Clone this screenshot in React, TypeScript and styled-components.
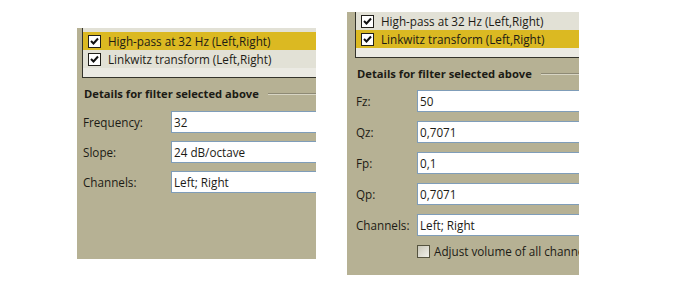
import React from 'react';
import styled, { createGlobalStyle } from 'styled-components';

const GlobalStyle = createGlobalStyle`
  html, body {
    margin: 0;
    padding: 0;
    background: #fff;
  }
  body {
    font-family: 'Open Sans', 'Liberation Sans', sans-serif;
    font-size: 11.7px;
    color: #1c1b15;
  }
`;

const Page = styled.div`
  width: 676px;
  height: 289px;
  box-sizing: border-box;
  padding-left: 77px;
  display: flex;
  align-items: flex-start;
  gap: 31px;
  overflow: hidden;
`;

const Panel = styled.div<{ $top: number; $width: number; $height: number }>`
  margin-top: ${(p) => p.$top}px;
  width: ${(p) => p.$width}px;
  height: ${(p) => p.$height}px;
  flex-shrink: 0;
  background: #b6b194;
  overflow: hidden;
  display: flex;
  flex-direction: column;
`;

const FilterList = styled.div<{ $inset: number }>`
  margin-left: ${(p) => p.$inset}px;
  margin-right: -30px;
  border-left: 1px solid #34332b;
  border-bottom: 1px solid #34332b;
  background: #ebeae3;
  padding-bottom: 9px;
  flex-shrink: 0;
`;

const CutRow = styled.div<{ $height: number }>`
  height: ${(p) => p.$height}px;
  background: #e2e1d6;
`;

const FilterRow = styled.div<{ $selected?: boolean }>`
  height: 18px;
  display: flex;
  align-items: center;
  gap: 7px;
  padding-left: 5px;
  white-space: nowrap;
  background: ${(p) => (p.$selected ? '#dbb922' : '#e2e1d6')};
`;

const Box = styled.span<{ $checked?: boolean }>`
  width: 13px;
  height: 13px;
  box-sizing: border-box;
  flex-shrink: 0;
  border: 1px solid ${(p) => (p.$checked ? '#201f1a' : '#55533f')};
  background: ${(p) => (p.$checked ? '#fff' : 'linear-gradient(135deg, #c9c7b8, #f1f0ea)')};
  display: flex;
  align-items: center;
  justify-content: center;
`;

const GroupHeader = styled.div<{ $inset: number }>`
  margin: 7px 0 0 ${(p) => p.$inset}px;
  height: 16px;
  display: flex;
  align-items: center;
  gap: 9px;
  font-size: 11.2px;
  font-weight: 700;
  white-space: nowrap;
  &::after {
    content: '';
    flex: 1;
    height: 1px;
    background: #8e8a75;
    box-shadow: 0 1px 0 #d8d5c4;
  }
`;

const Fields = styled.div<{ $inset: number; $label: number; $gap: number; $top: number }>`
  margin: ${(p) => p.$top}px 0 0 ${(p) => p.$inset}px;
  display: grid;
  grid-template-columns: ${(p) => p.$label}px 320px;
  row-gap: ${(p) => p.$gap}px;
  align-items: center;
`;

const Label = styled.div`
  white-space: nowrap;
`;

const Input = styled.div`
  height: 22px;
  box-sizing: border-box;
  border: 1px solid #7f9db9;
  background: #fff;
  padding-left: 2px;
  display: flex;
  align-items: center;
  white-space: nowrap;
`;

const Option = styled.div`
  grid-column: 2;
  margin-top: -2px;
  display: flex;
  align-items: center;
  gap: 4px;
  white-space: nowrap;
`;

const Check = ({ checked }: { checked?: boolean }) => (
  <Box $checked={checked}>
    {checked && (
      <svg width="9" height="9" viewBox="0 0 9 9">
        <path d="M1 4 L3.5 6.5 L8 1.5" fill="none" stroke="#111" strokeWidth="2" />
      </svg>
    )}
  </Box>
);

type Filter = { name: string; selected?: boolean };
type Field = { label: string; value: string };

const FilterPanel = (props: {
  top: number;
  width: number;
  height: number;
  inset: number;
  cut: number;
  filters: Filter[];
  label: number;
  gap: number;
  fieldsTop: number;
  fields: Field[];
  adjust?: boolean;
}) => (
  <Panel $top={props.top} $width={props.width} $height={props.height}>
    <FilterList $inset={props.inset}>
      {props.cut > 0 && <CutRow $height={props.cut} />}
      {props.filters.map((f) => (
        <FilterRow key={f.name} $selected={f.selected}>
          <Check checked />
          {f.name}
        </FilterRow>
      ))}
    </FilterList>
    <GroupHeader $inset={props.inset + 2}>Details for filter selected above</GroupHeader>
    <Fields $inset={props.inset + 1} $label={props.label} $gap={props.gap} $top={props.fieldsTop}>
      {props.fields.map((f) => (
        <React.Fragment key={f.label}>
          <Label>{f.label}</Label>
          <Input>{f.value}</Input>
        </React.Fragment>
      ))}
      {props.adjust && (
        <Option>
          <Check />
          Adjust volume of all channels
        </Option>
      )}
    </Fields>
  </Panel>
);

const App = () => (
  <>
    <GlobalStyle />
    <Page>
      <FilterPanel
        top={28}
        width={239}
        height={231}
        inset={5}
        cut={4}
        filters={[
          { name: 'High-pass at 32 Hz (Left,Right)', selected: true },
          { name: 'Linkwitz transform (Left,Right)' },
        ]}
        label={88}
        gap={8}
        fieldsTop={10}
        fields={[
          { label: 'Frequency:', value: '32' },
          { label: 'Slope:', value: '24 dB/octave' },
          { label: 'Channels:', value: 'Left; Right' },
        ]}
      />
      <FilterPanel
        top={12}
        width={232}
        height={263}
        inset={8}
        cut={0}
        filters={[
          { name: 'High-pass at 32 Hz (Left,Right)' },
          { name: 'Linkwitz transform (Left,Right)', selected: true },
        ]}
        label={61}
        gap={9}
        fieldsTop={9}
        fields={[
          { label: 'Fz:', value: '50' },
          { label: 'Qz:', value: '0,7071' },
          { label: 'Fp:', value: '0,1' },
          { label: 'Qp:', value: '0,7071' },
          { label: 'Channels:', value: 'Left; Right' },
        ]}
        adjust
      />
    </Page>
  </>
);

export default App;
